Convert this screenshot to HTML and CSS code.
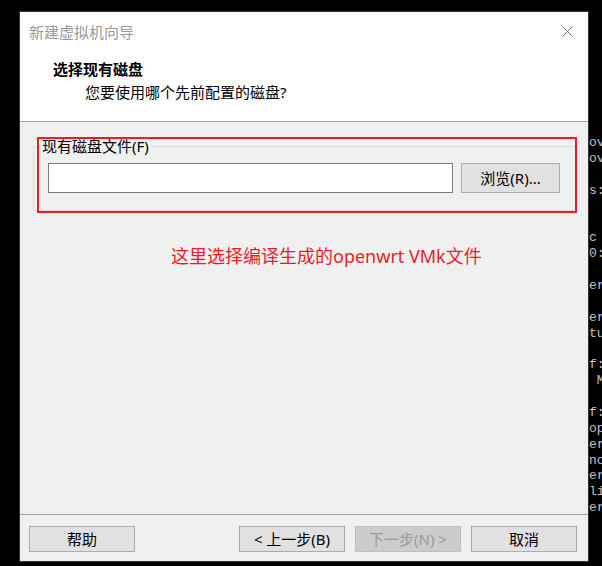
FILE: index.html
```html
<!DOCTYPE html>
<html lang="zh-CN">
<head>
<meta charset="utf-8">
<title>新建虚拟机向导</title>
<link rel="stylesheet" href="styles.css">
</head>
<body>
<pre class="terminal">ov
ov

s:


c
0:

er

er
tu

f:
 M

f:
op
er
no
er
li
er</pre>
<div class="window">
  <div class="header">
    <div class="titlebar">
      <span class="title">新建虚拟机向导</span>
      <svg class="close" width="11" height="11" viewBox="0 0 11 11"><path d="M0.5 0.5 L10.5 10.5 M10.5 0.5 L0.5 10.5" stroke="#707070" stroke-width="1" fill="none"/></svg>
    </div>
    <div class="heading">选择现有磁盘</div>
    <div class="subheading">您要使用哪个先前配置的磁盘?</div>
  </div>
  <div class="content">
    <fieldset class="group">
      <legend class="legend">现有磁盘文件(F)</legend>
      <div class="row">
        <div class="input"></div>
        <div class="btn browse">浏览(R)...</div>
      </div>
    </fieldset>
    <p class="note">这里选择编译生成的openwrt VMk文件</p>
  </div>
  <div class="footer">
    <div class="btn">帮助</div>
    <div class="spacer"></div>
    <div class="btn">&lt; 上一步(B)</div>
    <div class="btn disabled">下一步(N) &gt;</div>
    <div class="btn">取消</div>
  </div>
  <div class="highlight"></div>
</div>
</body>
</html>
```
FILE: styles.css
```css
html, body {
  margin: 0;
  padding: 0;
}
body {
  width: 602px;
  height: 566px;
  background: #000;
  position: relative;
  overflow: hidden;
  font-family: "Noto Sans", "Noto Sans CJK SC", sans-serif;
  font-size: 15px;
  color: #000;
}
.terminal {
  position: absolute;
  left: 589px;
  top: 135px;
  margin: 0;
  font-family: "Liberation Mono", monospace;
  font-size: 13px;
  line-height: 15.87px;
  color: #c0c0c0;
}
.window {
  position: absolute;
  left: 19px;
  top: 11px;
  width: 568px;
  height: 549px;
  border: 1px solid #333;
  display: flex;
  flex-direction: column;
  background: #f0f0f0;
}
.header {
  height: 109px;
  background: #fff;
  border-bottom: 1px solid #a0a0a0;
  box-sizing: content-box;
}
.titlebar {
  height: 39px;
  display: flex;
  align-items: center;
  justify-content: space-between;
  padding: 0 15px 0 9px;
}
.title {
  color: #999;
  line-height: 20px;
}
.close {
  display: block;
}
.heading {
  margin-top: 8px;
  padding-left: 33px;
  font-weight: bold;
  line-height: 20px;
}
.subheading {
  margin-top: 3px;
  padding-left: 65px;
  line-height: 20px;
}
.content {
  flex: 1;
  display: flex;
  flex-direction: column;
}
.group {
  margin: 15px 12px 0 13px;
  padding: 0;
  border: 1px solid #dcdcdc;
  min-width: 0;
}
.legend {
  margin-left: 6px;
  padding: 0 2px;
  line-height: 18px;
}
.row {
  display: flex;
  gap: 8px;
  padding: 8px 15px 17px 14px;
}
.input {
  width: 403px;
  height: 28px;
  background: #fff;
  border: 1px solid #7a7a7a;
}
.btn {
  box-sizing: border-box;
  width: 106px;
  height: 26px;
  background: #e1e1e1;
  border: 1px solid #adadad;
  display: flex;
  align-items: center;
  justify-content: center;
  line-height: 20px;
}
.browse {
  width: 99px;
  height: 30px;
}
.note {
  margin: 33px 0 0 151px;
  color: #ed1c24;
  font-size: 18px;
  line-height: 24px;
}
.footer {
  border-top: 1px solid #a0a0a0;
  height: 47px;
  box-sizing: border-box;
  display: flex;
  align-items: flex-start;
  gap: 10px;
  padding: 11px 11px 0 9px;
}
.spacer {
  flex: 1;
}
.disabled {
  background: #cccccc;
  border-color: #bfbfbf;
  color: #9a9a9a;
}
.highlight {
  position: absolute;
  left: 17px;
  top: 125px;
  width: 536px;
  height: 72px;
  border: 2px solid #ed1c24;
}
```
